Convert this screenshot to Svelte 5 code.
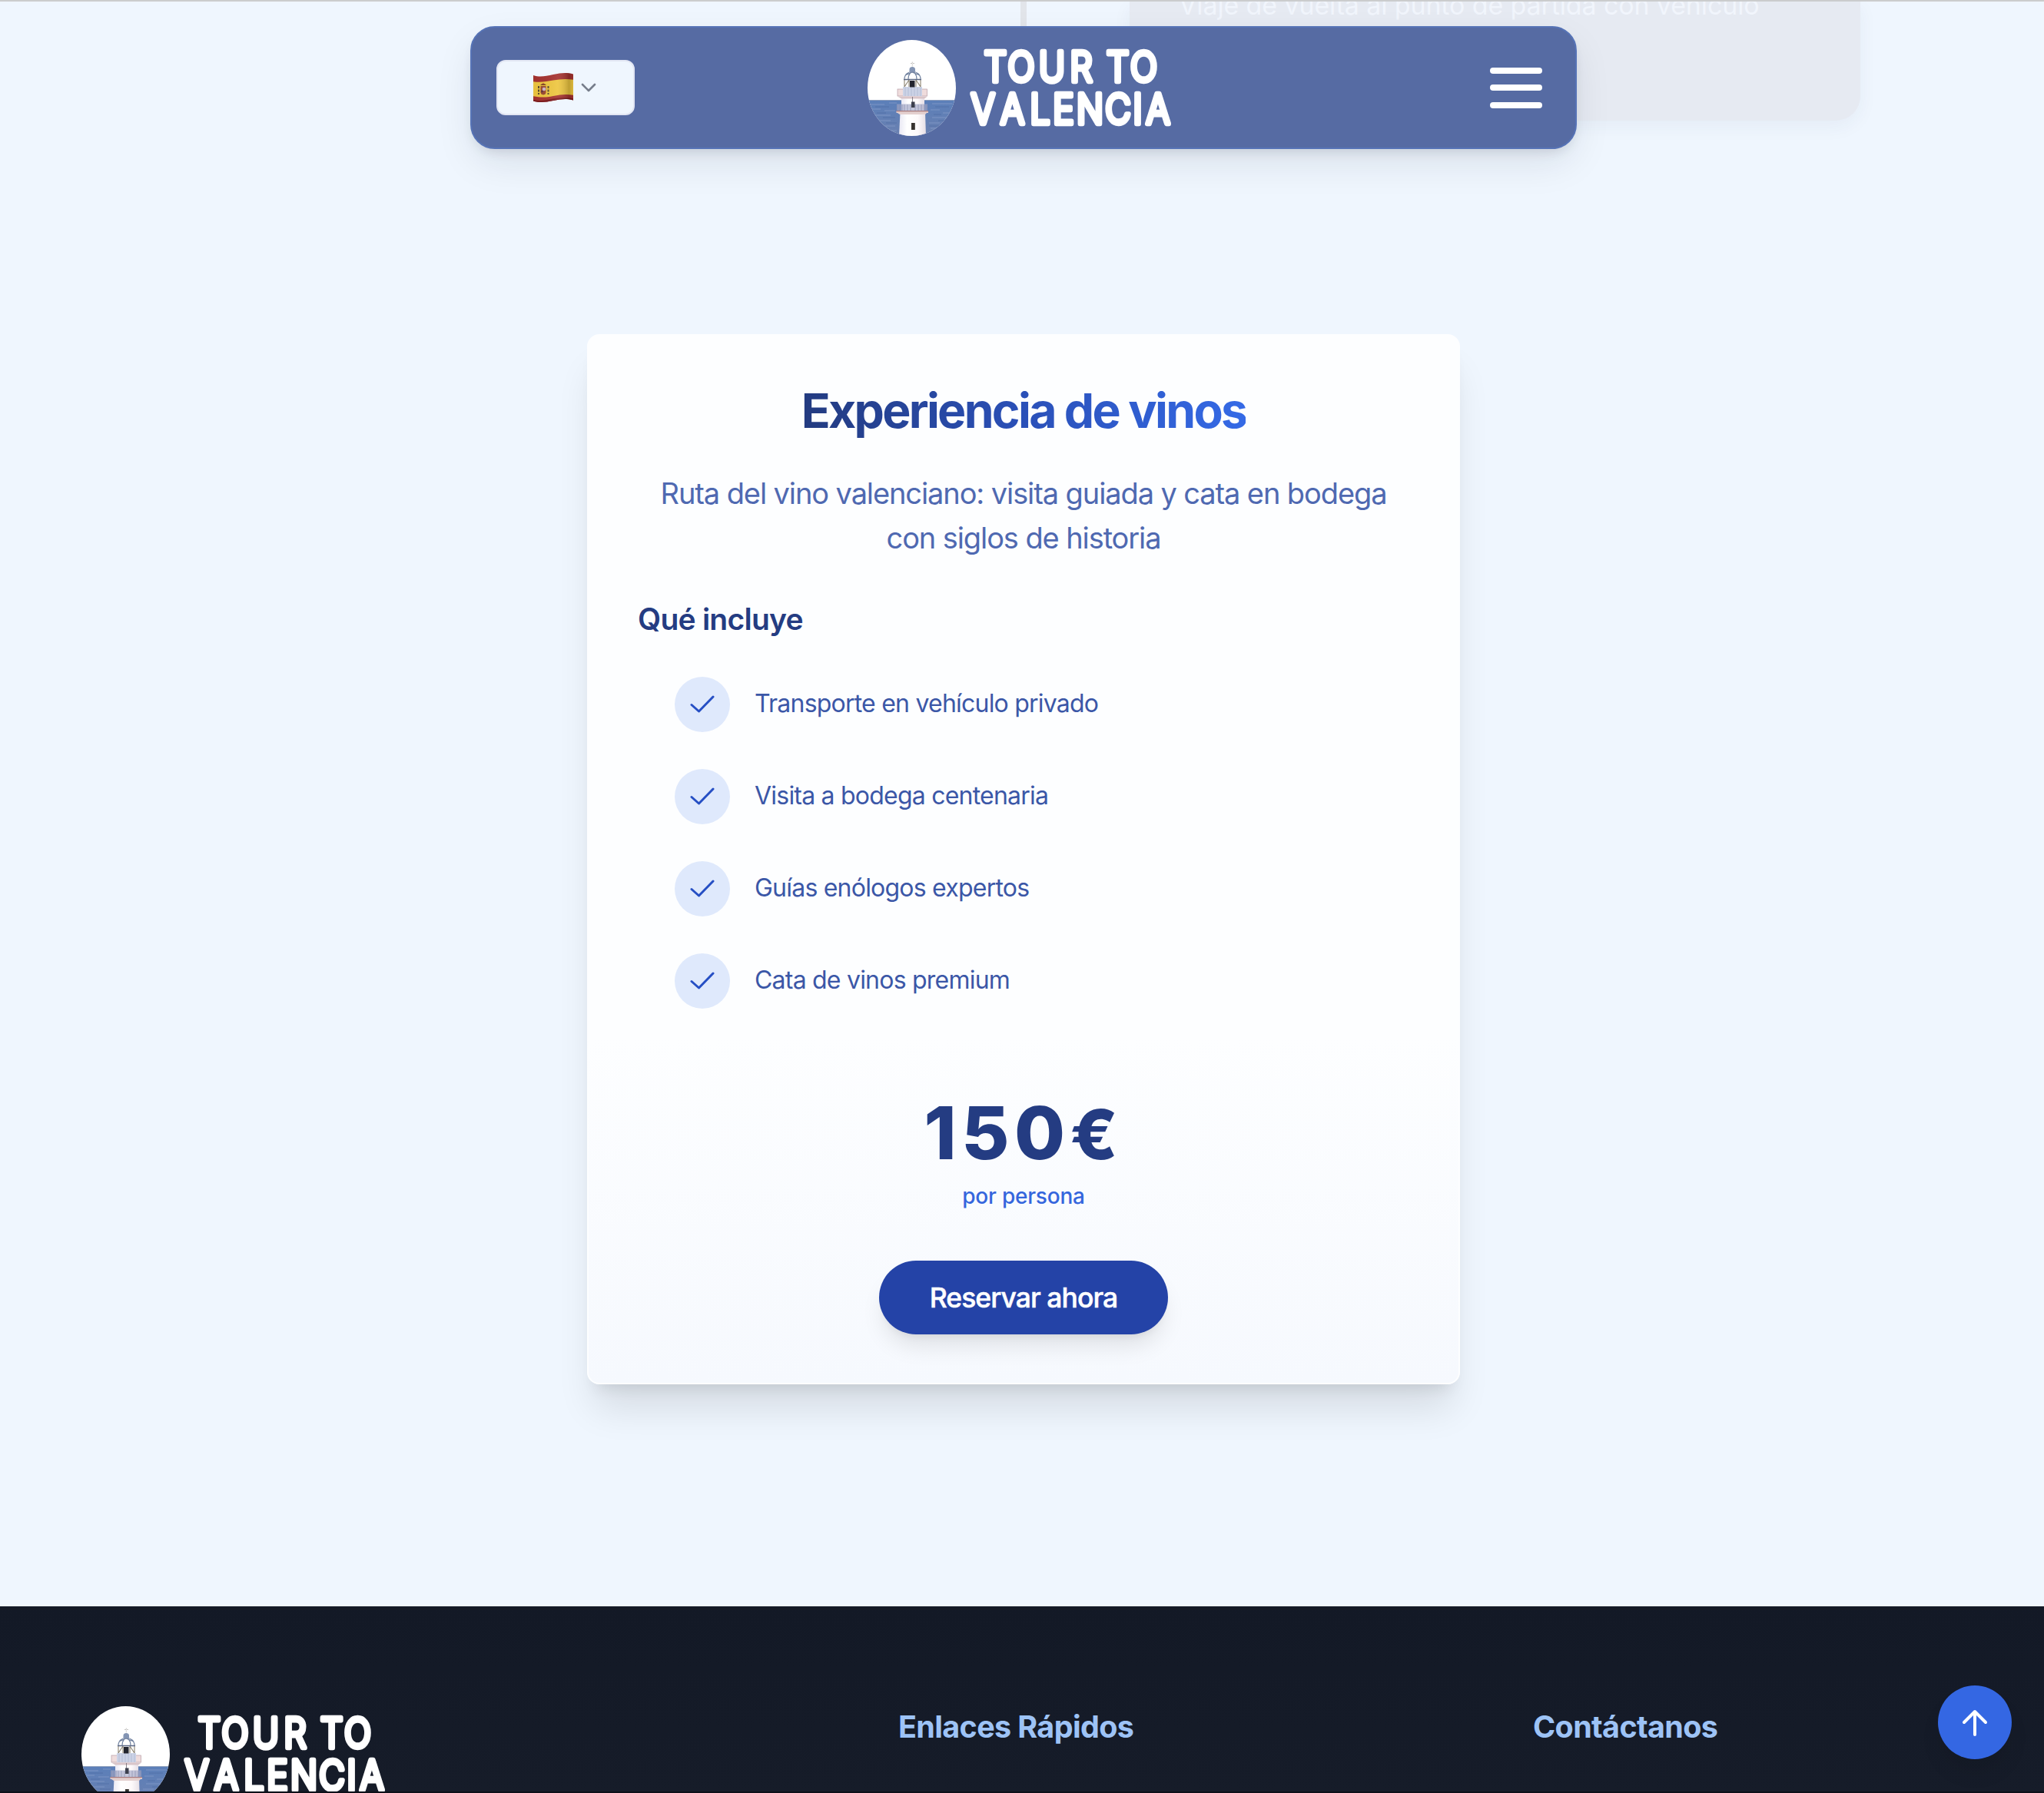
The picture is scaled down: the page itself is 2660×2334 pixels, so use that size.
<script>
  const included = [
    'Transporte en vehículo privado',
    'Visita a bodega centenaria',
    'Guías enólogos expertos',
    'Cata de vinos premium',
  ];
</script>

{#snippet logo()}
  <svg class="logo" viewBox="0 0 396 125" width="396" height="125">
    <defs>
      <clipPath id="badge"><ellipse cx="57.5" cy="62.5" rx="57.5" ry="62.5" /></clipPath>
      <linearGradient id="sea" x1="0" y1="0" x2="0" y2="1">
        <stop offset="0" stop-color="#5b7fb9" /><stop offset="1" stop-color="#6a80b0" />
      </linearGradient>
      <linearGradient id="tower" x1="0" y1="0" x2="1" y2="0">
        <stop offset="0" stop-color="#e9e8f4" /><stop offset=".3" stop-color="#fff" /><stop offset=".7" stop-color="#fdf9fa" /><stop offset="1" stop-color="#e6dfe6" />
      </linearGradient>
    </defs>
    <g clip-path="url(#badge)">
      <rect width="115" height="125" fill="#fff" />
      <rect y="78" width="115" height="47" fill="url(#sea)" />
      <path d="M0 78.5H115" stroke="#8fa0bd" />
      <path d="M2 84h20M28 82h10M84 83h26M5 90h12M22 92h14M82 91h12M98 95h14M8 98h22M84 101h22M14 105h16M80 108h14M18 112h18M82 115h16M26 118h12" stroke="#8a9fca" stroke-width="1" opacity=".7" />
      <path d="M10 87h18M88 87h18M12 95h12M86 97h10M20 101h16M92 105h12M24 108h14M80 112h14" stroke="#4a69a2" stroke-width="1" opacity=".6" />
      <path d="M42.5 94H75L76 125H41Z" fill="url(#tower)" />
      <rect x="44" y="74" width="30" height="19" fill="url(#tower)" />
      <rect x="38" y="83.5" width="40" height="8.5" fill="#a5a9c8" opacity=".65" />
      <path d="M39 84v8M42 84v8M45 84v8M48 84v8M52 84v8M56 84v8M62 84v8M66 84v8M70 84v8M74 84v8M77 84v8" stroke="#7f86a8" stroke-width=".6" />
      <path d="M37.5 92.5H79V95H77L75 97H42L39 95H37.5Z" fill="#e3cfce" />
      <path d="M37.5 92.6H79" stroke="#a87c80" stroke-width="1.2" />
      <rect x="39" y="64" width="38.500" height="9" fill="#efdcdc" stroke="#b79da6" stroke-width=".7" />
      <rect x="46" y="61" width="25" height="12" fill="#ccd3e6" />
      <path d="M49 62v11M53 62v11M57 62v11M61 62v11M65 62v11M69 62v11" stroke="#aab4cf" stroke-width=".7" />
      <path d="M39 73.500H78L74 76.500H44Z" fill="#d9c5c9" />
      <path d="M48 51.500V61M69 51.500V61M48 61L54 52M69 61L63 52M54 52V61M63 52V61" stroke="#8b826f" stroke-width="1.100" fill="none" />
      <path d="M47 51.500H70" stroke="#5b6884" stroke-width="1.500" />
      <path d="M48 51C48 38 69 38 69 51M53 51C53 43 58 41 58.500 41C59 41 64 43 64 51M49 46L58 42L68 46" stroke="#7283a0" stroke-width="1.200" fill="none" />
      <path d="M55 53H61.500V61.500H55Z" fill="#22242e" />
      <path d="M54.500 41.500V38C54.500 34 62 34 62 38V41.500Z" fill="#8394b3" />
      <path d="M58.300 28.500V35M56 30.500H61" stroke="#b9b6b4" stroke-width=".8" stroke-dasharray="2 1" />
      <path d="M58.500 74V81" stroke="#6e6a74" stroke-width=".8" />
      <rect x="57" y="80.500" width="4.500" height="7.500" fill="#3c3f4d" />
      <rect x="57" y="108" width="4.800" height="9" fill="#37332f" />
    </g>
    <g class="word" transform="scale(.86 1)">
      <text x="193.600 232.600 279 323.300 350 378.500 418" y="54">TOUR TO</text>
      <text x="174.600 219.200 261 296.500 336.600 379.100 408.700 439.500" y="109">VALENCIA</text>
    </g>
  </svg>
{/snippet}

<div class="page">
  <section class="timeline">
    <div class="axis"></div>
    <article class="step"><span>Viaje de vuelta al punto de partida con vehículo</span></article>
  </section>

  <header class="nav">
    <button class="lang" aria-label="Idioma">
      <svg width="54" height="40" viewBox="0 0 54 40">
        <defs>
          <clipPath id="wave"><path d="M1 4C10 7 17 5 27 3S44 0 53 2.500V36.500C44 34 37 35 27 37S10 40 1 37.500Z" /></clipPath>
          <linearGradient id="fold" x1="0" y1="0" x2="1" y2="0">
            <stop offset="0" stop-color="#000" stop-opacity=".03" /><stop offset=".6" stop-color="#fff" stop-opacity=".08" /><stop offset=".88" stop-color="#000" stop-opacity=".2" /><stop offset="1" stop-color="#000" stop-opacity=".06" />
          </linearGradient>
        </defs>
        <g clip-path="url(#wave)">
          <rect width="54" height="40" fill="#a5322f" />
          <path d="M0 12C10 14 18 12 27 10.500S44 8 54 10V30C44 28 37 29 27 31S10 33 0 31Z" fill="#eec63f" />
          <path d="M0 37C10 40 17 38 27 36S44 34 54 36" stroke="#7c1a1d" stroke-width="3" fill="none" />
          <path d="M10.500 18H17.500V26Q17.500 29 14 29.500Q10.500 29 10.500 26Z" fill="#9c4a32" />
          <path d="M10 17Q14 12.500 18 17Z" fill="#7d4a24" />
          <path d="M14 14.500V16" stroke="#a5322f" stroke-width="1.500" />
          <circle cx="15" cy="22" r="2.300" fill="#cdb7c9" /><circle cx="12.500" cy="25" r="1.300" fill="#5b3242" />
          <path d="M8 18V29M20.500 18V29" stroke="#5d4b2c" stroke-width="2" stroke-dasharray="3 1.500" />
          <rect width="54" height="40" fill="url(#fold)" />
        </g>
      </svg>
      <svg width="20" height="12" viewBox="0 0 20 12"><path d="M2 2L10 10L18 2" fill="none" stroke="#767d8b" stroke-width="2.600" stroke-linecap="round" stroke-linejoin="round" /></svg>
    </button>
    {@render logo()}
    <button class="menu" aria-label="Menú"><i></i><i></i><i></i></button>
  </header>

  <main>
    <article class="card">
      <h2>Experiencia de vinos</h2>
      <p class="desc">Ruta del vino valenciano: visita guiada y cata en bodega<br />con siglos de historia</p>
      <h3>Qué incluye</h3>
      <ul>
        {#each included as item}
          <li>
            <span class="tick"><svg width="32" height="24" viewBox="0 0 32 24"><path d="M2 12.500L11.500 21L30 2" fill="none" stroke="#264fc4" stroke-width="3" stroke-linecap="round" stroke-linejoin="round" /></svg></span>
            <span class="label">{item}</span>
          </li>
        {/each}
      </ul>
      <div class="price">150<span>€</span></div>
      <div class="per">por persona</div>
      <button class="book">Reservar ahora</button>
    </article>
  </main>

  <footer>
    <div class="brand">{@render logo()}</div>
    <h4>Enlaces Rápidos</h4>
    <h4>Contáctanos</h4>
  </footer>

  <button class="top" aria-label="Subir">
    <svg width="36" height="36" viewBox="0 0 36 36"><path d="M18 34V4M4 18L18 4L32 18" fill="none" stroke="#fff" stroke-width="4" stroke-linecap="round" stroke-linejoin="round" /></svg>
  </button>
</div>

<style>
  :global(body) { margin: 0; background: #eff6fe; }
  .page { position: relative; box-sizing: border-box; width: 2660px; height: 2334px; overflow: hidden; display: flex; flex-direction: column; border-top: 2px solid #cbcccd; background: #eff6fe; font-family: Inter, "Liberation Sans", sans-serif; }
  button { border: 0; padding: 0; font: inherit; }
  h2, h3, h4, p, ul { margin: 0; padding: 0; font-weight: inherit; }
  .timeline { display: grid; grid-template-columns: 1328px 8px 134px 951px; height: 433px; }
  .axis { grid-column: 2; height: 100px; background: #e2e5ea; }
  .step { grid-column: 4; box-sizing: border-box; height: 155px; padding-left: 64px; border-radius: 0 0 32px 32px; background: #e6eaf2; box-shadow: 0 8px 24px rgba(30, 50, 90, .05); color: #f1f5fc; font-size: 34px; line-height: 40px; letter-spacing: -.13px; white-space: nowrap; }
  .step span { display: block; margin-top: -15px; }
  .nav { position: absolute; left: 612px; top: 32px; width: 1440px; height: 160px; box-sizing: border-box; border: 2px solid #5673b6; border-radius: 32px; background: #566ba3; box-shadow: 0 20px 50px -4px rgba(20, 30, 50, .1), 0 8px 16px -6px rgba(20, 30, 50, .14); display: flex; align-items: center; padding: 0 43px 0 32px; }
  .lang { width: 180px; height: 72px; box-sizing: border-box; border: 2px solid #e2e6f3; border-radius: 12px; background: #eff6fe; display: flex; align-items: center; justify-content: center; gap: 9px; padding-right: 3px; }
  .nav .logo { margin-left: 303px; }
  .logo { display: block; flex: none; }
  .word { font-family: Inter, sans-serif; font-weight: 300; font-size: 53.500px; text-anchor: middle; fill: #fff; stroke: #fff; stroke-width: 6.500px; stroke-linejoin: round; }
  .menu { width: 68px; margin-left: auto; background: none; display: flex; flex-direction: column; gap: 14.500px; }
  .menu i { height: 8px; border-radius: 4px; background: #fff; }
  main { display: flex; justify-content: center; align-items: flex-start; height: 1656px; padding-left: 4px; }
  .card { box-sizing: border-box; width: 1136px; height: 1367px; border: 2px solid #fdfeff; border-radius: 16px; background: linear-gradient(#fdfeff 67%, #f6f9fe); box-shadow: 0 40px 50px -10px rgba(0, 0, 0, .11), 0 16px 20px -12px rgba(0, 0, 0, .1); padding: 61px 64px 0; display: flex; flex-direction: column; align-items: center; }
  h2 { font-size: 62.500px; font-weight: 700; line-height: 72px; letter-spacing: -2.700px; background: linear-gradient(90deg, #233b80, #2a50b8 50%, #356ae6); -webkit-background-clip: text; background-clip: text; color: transparent; }
  .desc { margin-top: 43px; font-size: 38px; line-height: 58px; letter-spacing: -1.100px; color: #4f69b1; text-align: center; white-space: nowrap; }
  h3 { align-self: flex-start; margin-top: 47px; font-size: 39px; font-weight: 600; line-height: 60px; letter-spacing: -.750px; color: #243c82; }
  ul { list-style: none; align-self: flex-start; margin: 45px 0 0 48px; display: grid; gap: 48px; }
  li { display: flex; align-items: center; gap: 32px; }
  .tick { width: 72px; height: 72px; border-radius: 50%; background: #dfe9fc; display: grid; place-items: center; }
  .label { margin-top: -2px; font-size: 32px; line-height: 48px; letter-spacing: -.780px; color: #3b57a7; }
  .price { margin-top: 113px; height: 97px; font-size: 95.500px; font-weight: 800; line-height: 96px; color: #243c82; letter-spacing: 6.500px; }
  .price span { font-size: 90px; line-height: 0; }
  .per { margin-top: 14px; font-size: 28px; font-weight: 500; line-height: 40px; letter-spacing: -.200px; color: #3566dd; }
  .book { margin-top: 64px; width: 376px; height: 96px; border-radius: 48px; background: #2443a7; color: #fff; font-size: 35.500px; font-weight: 500; letter-spacing: -.950px; -webkit-text-stroke: .5px #fff; box-shadow: 0 20px 30px -6px rgba(0, 0, 0, .1), 0 8px 12px -8px rgba(0, 0, 0, .1); }
  footer { flex: 1; box-sizing: border-box; background: linear-gradient(#131926, #161c29); border-bottom: 2px solid #0c1019; display: grid; grid-template-columns: 1063px 826px 1fr; padding-left: 106px; overflow: hidden; }
  .brand { padding-top: 130px; }
  h4 { padding-top: 129px; font-size: 39.500px; font-weight: 700; line-height: 56px; letter-spacing: -.650px; color: #9dc3f6; }
  .top { position: absolute; left: 2522px; top: 2192px; width: 96px; height: 96px; border-radius: 50%; background: #3467e3; display: grid; place-items: center; box-shadow: 0 20px 30px -6px rgba(0, 0, 0, .1); }
</style>
